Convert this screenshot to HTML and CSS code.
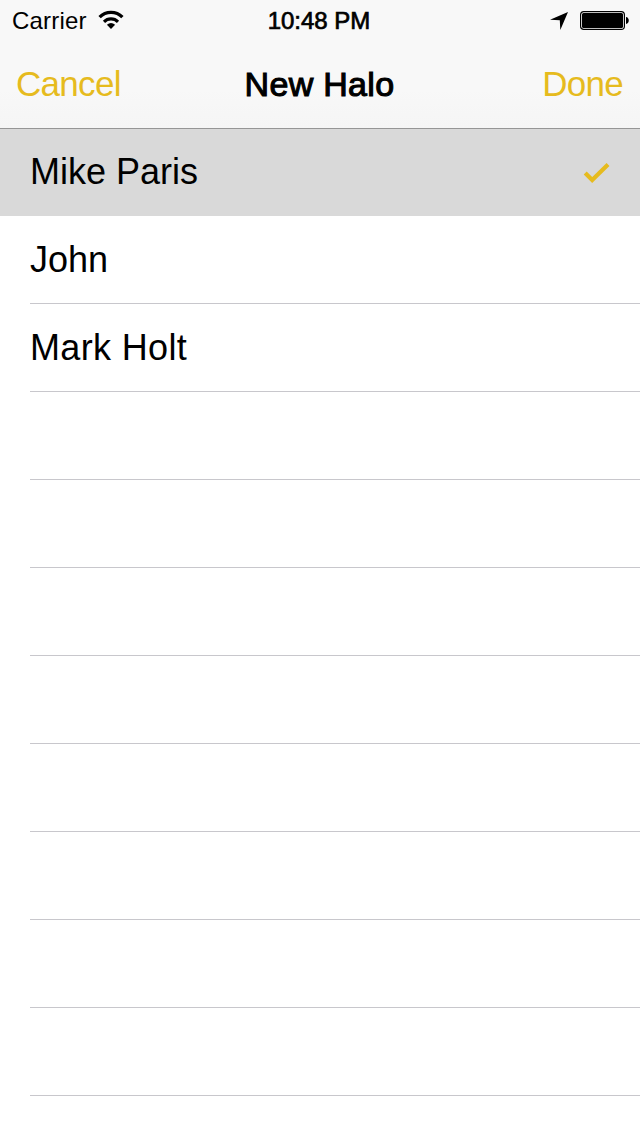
FILE: index.html
```html
<!DOCTYPE html>
<html lang="en">
<head>
<meta charset="utf-8">
<title>New Halo</title>
<link rel="stylesheet" href="styles.css">
</head>
<body>
<header class="header">
  <div class="status">
    <div class="status-left">
      <span class="carrier">Carrier</span>
      <svg class="wifi" width="26" height="20" viewBox="0 0 26 20">
        <path d="M1.6 7.2A16 16 0 0 1 24.4 7.2" fill="none" stroke="#000" stroke-width="3.3"/>
        <path d="M6 11.8A9.8 9.8 0 0 1 20 11.8" fill="none" stroke="#000" stroke-width="3.1"/>
        <path d="M8.9 14.8Q13 11.2 17.1 14.8L13 19Z"/>
      </svg>
    </div>
    <span class="time">10:48 PM</span>
    <div class="status-right">
      <svg width="18" height="18" viewBox="0 0 18 18"><path d="M18 0L10.3 18L9.8 8.3L0 7.8Z"/></svg>
      <svg width="50" height="20" viewBox="0 0 50 20">
        <rect x=".6" y=".6" width="43.8" height="17.8" rx="3.2" fill="#fff" stroke="#000" stroke-width="1.2"/>
        <rect x="2" y="2" width="41" height="15" rx="1.5"/>
        <path d="M46 6C49.7 6.3 49.7 12.7 46 13Z"/>
      </svg>
    </div>
  </div>
  <nav class="nav">
    <span class="action cancel">Cancel</span>
    <span class="title">New Halo</span>
    <span class="action done">Done</span>
  </nav>
</header>
<ul class="list">
  <li class="row selected"><span class="name">Mike Paris</span>
    <svg class="check" width="28" height="22" viewBox="0 0 28 22"><path d="M2.2 11L9.2 18L25 2.4" fill="none" stroke="#e6bb1e" stroke-width="4.2"/></svg>
  </li>
  <li class="row"><span class="name">John</span></li>
  <li class="row"><span class="name wide">Mark Holt</span></li>
  <li class="row"></li>
  <li class="row"></li>
  <li class="row"></li>
  <li class="row"></li>
  <li class="row"></li>
  <li class="row"></li>
  <li class="row"></li>
  <li class="row"></li>
</ul>
</body>
</html>
```
FILE: styles.css
```css
* { box-sizing: border-box; }
body {
  margin: 0;
  height: 1136px;
  overflow: hidden;
  background: #fff;
  color: #000;
  font-family: "Liberation Sans", Arial, sans-serif;
}
svg { display: block; flex: none; }
.header {
  height: 129px;
  background: linear-gradient(#f8f8f8 0 70%, #f5f5f5);
  border-bottom: 1px solid #959595;
}
.status, .nav {
  display: grid;
  grid-template-columns: 1fr auto 1fr;
  align-items: center;
  white-space: nowrap;
}
.status { height: 40px; padding: 2px 10px 0 12px; font-size: 24px; }
.status-left, .status-right { display: flex; align-items: center; }
.status-left { gap: 11px; }
.status-right { justify-content: flex-end; gap: 12px; }
.carrier { letter-spacing: .2px; }
.wifi { margin-top: -2px; }
.time { margin: 0 3px 0 -1px; -webkit-text-stroke: .7px #000; }
.nav { height: 88px; padding: 0 17px 0 16px; font-size: 35px; }
.action { color: #e6bb1e; letter-spacing: -.7px; }
.title { font-size: 34px; letter-spacing: .3px; -webkit-text-stroke: 1.1px #000; }
.done { justify-self: end; }
.list { margin: 0; padding: 0; list-style: none; }
.row {
  height: 88px;
  margin-left: 30px;
  display: flex;
  align-items: center;
  justify-content: space-between;
  border-bottom: 1px solid #c8c7cc;
  font-size: 36px;
}
.wide { letter-spacing: .35px; }
.selected {
  height: 87px;
  margin-left: 0;
  padding: 0 29px 0 30px;
  background: #d9d9d9;
  border-bottom: 0;
}
.selected .name { margin-bottom: 2px; }
```
